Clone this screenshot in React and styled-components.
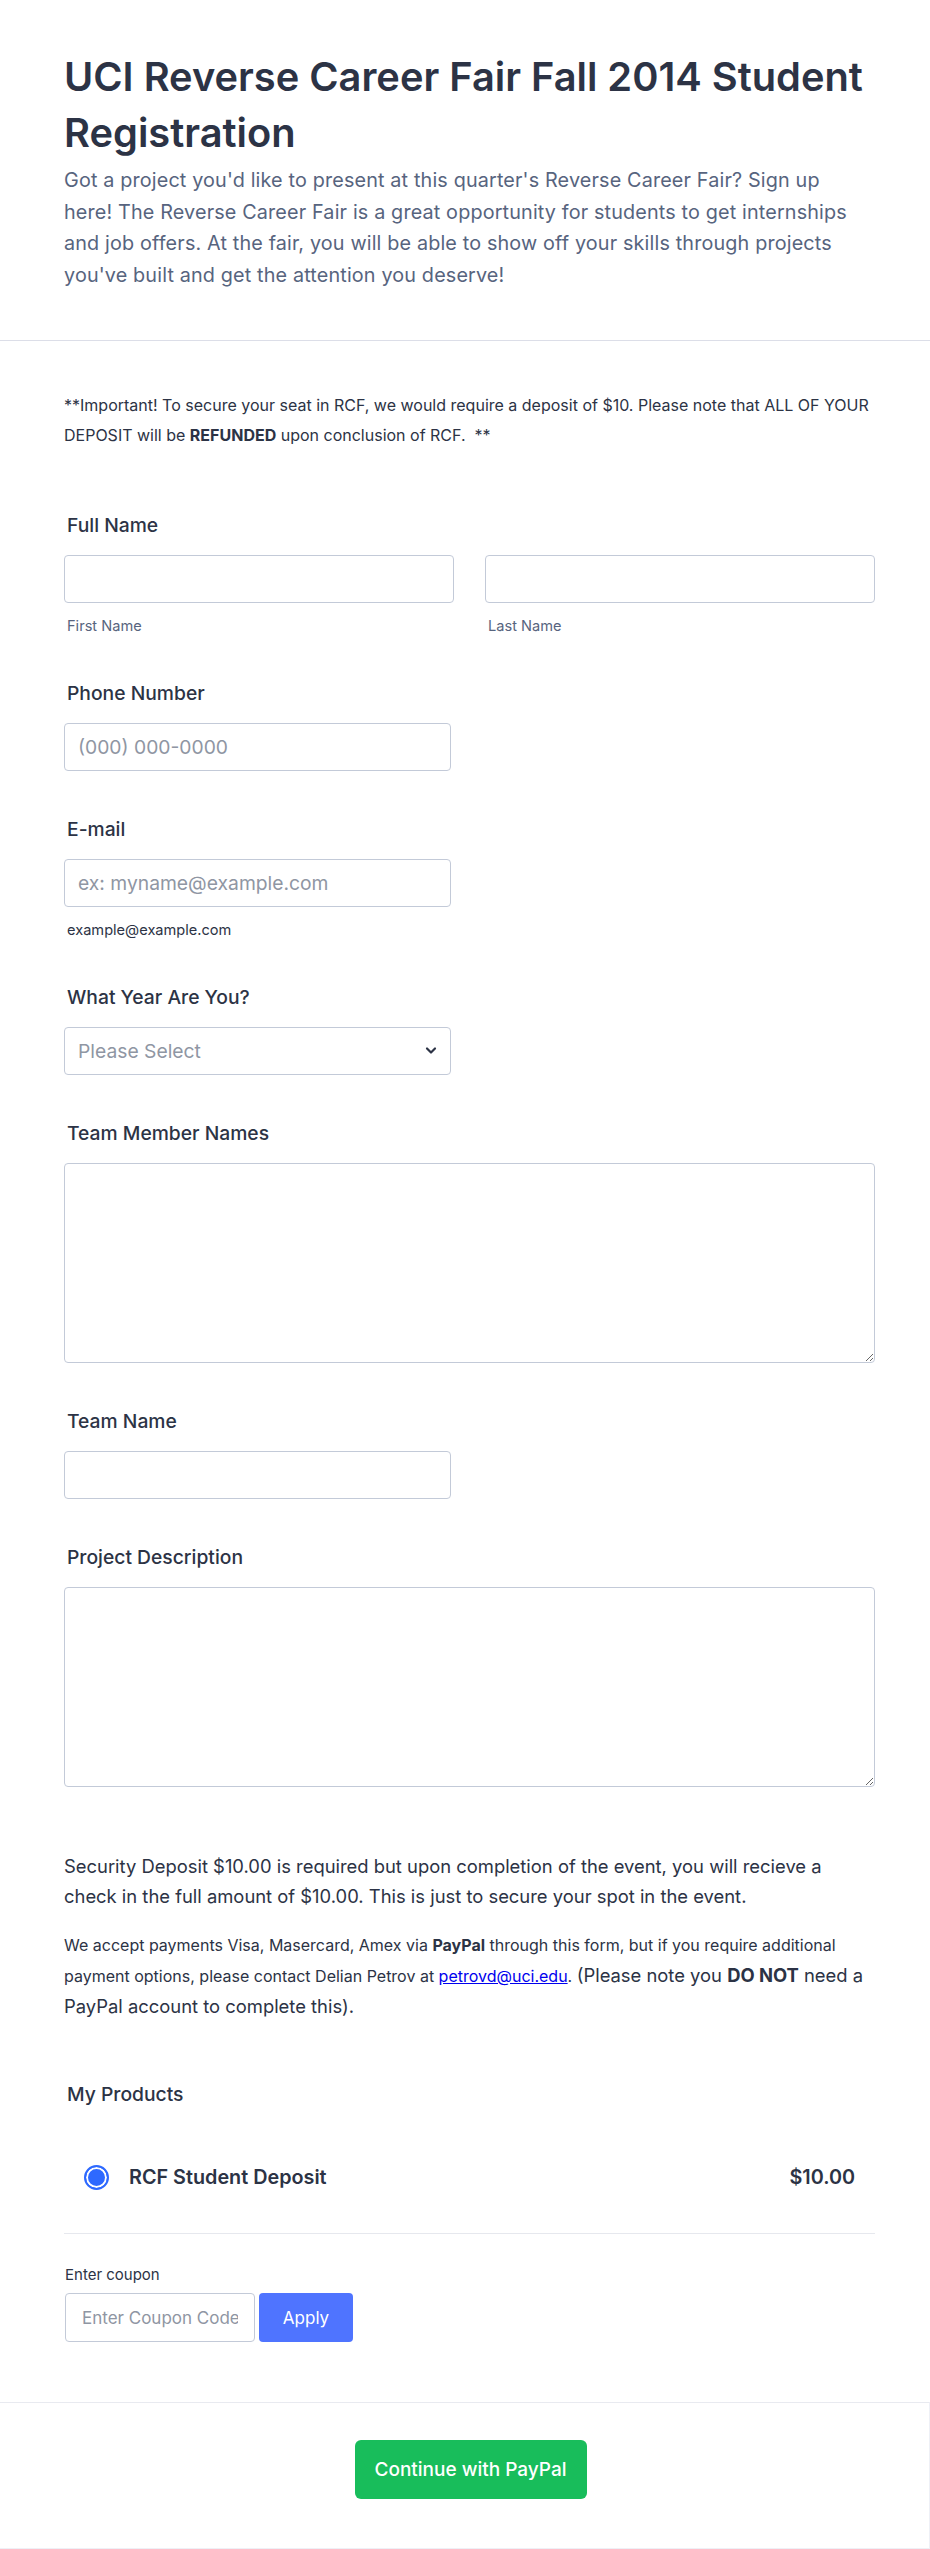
import styled, { createGlobalStyle } from 'styled-components'

const GlobalStyle = createGlobalStyle`
    body {
        margin: 0;
        background: #ffffff;
        font-family: 'Inter', 'Noto Sans', sans-serif;
        color: #2C3345;
    }
    * { box-sizing: border-box; }
`

const Page = styled.div`
    width: 930px;
    background: #fff;
`

const Header = styled.header`
    padding: 49px 64px 49px;
    border-bottom: 1px solid #DCDEE8;
`

const Title = styled.h1`
    margin: 0;
    font-size: 39.8px;
    line-height: 56px;
    font-weight: 600;
    color: #2C3345;
`

const Subtitle = styled.p`
    margin: 4px 0 0;
    font-size: 19.8px;
    letter-spacing: 0.15px;
    line-height: 31.5px;
    color: #57647E;
`

const Body = styled.main`
    padding: 0 55px 60px 64px;
`

const Notice = styled.p`
    margin: 49px 0 40px;
    font-size: 16px;
    line-height: 30px;
    color: #2C3345;
`

const Field = styled.section`
    padding: 23px 0;
`

const Label = styled.div`
    padding-left: 3px;
    margin-bottom: 18px;
    font-size: 19.3px;
    line-height: 24px;
    font-weight: 500;
    color: #2C3345;
`

const NameRow = styled.div`
    display: grid;
    grid-template-columns: 1fr 1fr;
    column-gap: 31px;
`

const SubLabel = styled.div`
    margin-top: 14px;
    padding-left: 3px;
    font-size: 14.6px;
    line-height: 18px;
    color: ${p => (p.$dark ? '#2C3345' : '#57647E')};
`

const Input = styled.input`
    display: block;
    width: ${p => p.$width || '100%'};
    height: 48px;
    padding: 0 13px;
    border: 1px solid #C3CAD8;
    border-radius: 4px;
    background: #fff;
    font-family: inherit;
    font-size: 19.3px;
    color: #2C3345;
    outline: none;

    &::placeholder { color: #8F96A3; }
`

const SelectWrap = styled.div`
    position: relative;
    width: 387px;
`

const Select = styled.select`
    display: block;
    width: 100%;
    height: 48px;
    padding: 0 13px;
    border: 1px solid #C3CAD8;
    border-radius: 4px;
    background: #fff;
    appearance: none;
    font-family: inherit;
    font-size: 19.3px;
    color: #8F96A3;
    outline: none;
`

const Chevron = styled.svg`
    position: absolute;
    right: 14px;
    top: 19px;
    pointer-events: none;
`

const TextArea = styled.textarea`
    display: block;
    width: 100%;
    height: 200px;
    border: 1px solid #C3CAD8;
    border-radius: 4px;
    font-family: inherit;
    font-size: 19px;
    outline: none;
`

const TextBlock = styled.div`
    padding: 41px 0 37px;
`

const Para = styled.p`
    margin: ${p => (p.$first ? '0' : '19px 0 0')};
    font-size: ${p => (p.$big ? '18.4px' : '16px')};
    line-height: 30px;
    color: #2C3345;

    a { color: #0000EE; }
`

const Big = styled.span`
    font-size: 18.4px;
`

const ProductSection = styled.section`
    padding-top: 23px;
    border-bottom: 1px solid #E6E8EE;
`

const ProductRow = styled.div`
    display: flex;
    align-items: center;
    height: 48px;
    margin: 47px 0 32px;
    padding: 0 20px;
    gap: 20px;
`

const Radio = styled.span`
    width: 25px;
    height: 25px;
    flex: none;
    border-radius: 50%;
    border: 2px solid #2E69FF;
    background: #2E69FF;
    box-shadow: inset 0 0 0 2px #fff;
`

const ProductName = styled.span`
    flex: 1;
    font-size: 19.8px;
    font-weight: 600;
    color: #2C3345;
`

const Price = styled.span`
    font-size: 19.8px;
    font-weight: 600;
    color: #2C3345;
`

const CouponLabel = styled.div`
    margin-top: 31px;
    padding-left: 1px;
    font-size: 15px;
    line-height: 20px;
    color: #2C3345;
`

const CouponRow = styled.div`
    display: flex;
    gap: 4px;
    margin-top: 8px;
    padding-left: 1px;
`

const CouponInput = styled(Input)`
    width: 190px;
    height: 49px;
    padding: 0 16px;
    font-size: 17px;
`

const ApplyButton = styled.button`
    width: 94px;
    height: 49px;
    border: none;
    border-radius: 4px;
    background: #4F74FF;
    color: #fff;
    font-family: inherit;
    font-size: 17px;
`

const Footer = styled.footer`
    display: flex;
    justify-content: center;
    padding: 37px 0 49px 12px;
    border-top: 1px solid #E8EAF0;
    border-right: 1px solid #EEF0F6;
    border-bottom: 1px solid #EEF0F6;
`

const SubmitButton = styled.button`
    width: 232px;
    height: 59px;
    border: none;
    border-radius: 6px;
    background: #18BD5B;
    color: #fff;
    font-family: inherit;
    font-size: 19px;
    font-weight: 500;
`

export default function App() {
    return (
        <Page>
            <GlobalStyle />
            <Header>
                <Title>UCI Reverse Career Fair Fall 2014 Student Registration</Title>
                <Subtitle>
                    Got a project you'd like to present at this quarter's Reverse Career Fair? Sign up here! The Reverse Career Fair is a great opportunity for students to get internships and job offers. At the fair, you will be able to show off your skills through projects you've built and get the attention you deserve!
                </Subtitle>
            </Header>

            <Body>
                <Notice>
                    **Important! To secure your seat in RCF, we would require a deposit of $10. Please note that ALL OF YOUR DEPOSIT will be <b>REFUNDED</b> upon conclusion of RCF.&nbsp; **
                </Notice>

                <Field>
                    <Label>Full Name</Label>
                    <NameRow>
                        <div>
                            <Input />
                            <SubLabel>First Name</SubLabel>
                        </div>
                        <div>
                            <Input />
                            <SubLabel>Last Name</SubLabel>
                        </div>
                    </NameRow>
                </Field>

                <Field>
                    <Label>Phone Number</Label>
                    <Input $width="387px" placeholder="(000) 000-0000" />
                </Field>

                <Field>
                    <Label>E-mail</Label>
                    <Input $width="387px" placeholder="ex: myname@example.com" />
                    <SubLabel $dark>example@example.com</SubLabel>
                </Field>

                <Field>
                    <Label>What Year Are You?</Label>
                    <SelectWrap>
                        <Select defaultValue="">
                            <option value="">Please Select</option>
                        </Select>
                        <Chevron width="12" height="9" viewBox="0 0 12 9">
                            <path d="M2 2.5 L6 6.5 L10 2.5" fill="none" stroke="#2C3345" strokeWidth="2.2" strokeLinecap="round" strokeLinejoin="round" />
                        </Chevron>
                    </SelectWrap>
                </Field>

                <Field>
                    <Label>Team Member Names</Label>
                    <TextArea />
                </Field>

                <Field>
                    <Label>Team Name</Label>
                    <Input $width="387px" />
                </Field>

                <Field>
                    <Label>Project Description</Label>
                    <TextArea />
                </Field>

                <TextBlock>
                    <Para $first $big>
                        Security Deposit $10.00 is required but upon completion of the event, you will recieve a check in the full amount of $10.00. This is just to secure your spot in the event.
                    </Para>
                    <Para>
                        We accept payments Visa, Masercard, Amex via <b>PayPal</b> through this form, but if you require additional payment options, please contact Delian Petrov at <a href="#">petrovd@uci.edu</a>. <Big>(Please note you <b>DO NOT</b> need a PayPal account to complete this).</Big>
                    </Para>
                </TextBlock>

                <ProductSection>
                    <Label>My Products</Label>
                    <ProductRow>
                        <Radio />
                        <ProductName>RCF Student Deposit</ProductName>
                        <Price>$10.00</Price>
                    </ProductRow>
                </ProductSection>

                <CouponLabel>Enter coupon</CouponLabel>
                <CouponRow>
                    <CouponInput placeholder="Enter Coupon Code" />
                    <ApplyButton>Apply</ApplyButton>
                </CouponRow>
            </Body>

            <Footer>
                <SubmitButton>Continue with PayPal</SubmitButton>
            </Footer>
        </Page>
    )
}
